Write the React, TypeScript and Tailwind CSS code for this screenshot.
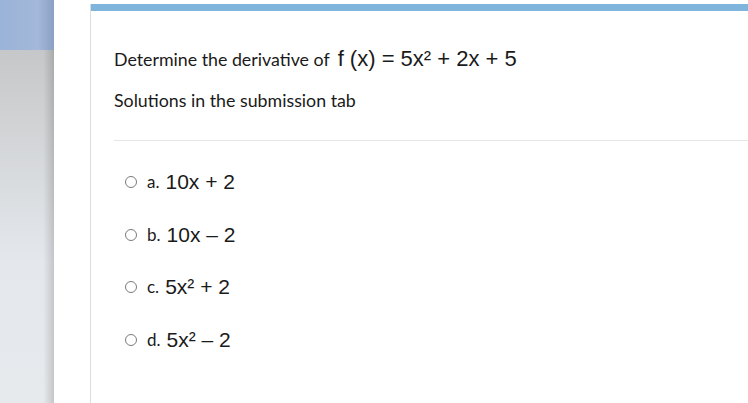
export default function App() {
  const options = [
    { letter: "a.", text: <>10x + 2</> },
    { letter: "b.", text: <>10x – 2</> },
    { letter: "c.", text: <>5x² + 2</> },
    { letter: "d.", text: <>5x² – 2</> },
  ];

  return (
    <div className="flex h-[403px] w-[748px] overflow-hidden bg-white">
      {/* left sidebar strip */}
      <div className="flex w-[54px] shrink-0 flex-col">
        <div className="h-[50px] bg-[linear-gradient(to_right,#9ab3d8,#a3b8da_70%,#8aa0c4)]" />
        <div className="flex-1 bg-[linear-gradient(to_bottom,#c6c7c8,#e4e8ec_60%,#e6eaed)]">
          <div className="h-full w-full bg-[linear-gradient(to_right,transparent_80%,rgba(0,0,0,0.15))]" />
        </div>
      </div>

      <div className="w-[36px] shrink-0" />

      {/* question card */}
      <div className="mt-[4px] flex flex-1 flex-col border-l border-[#dcdcdc]">
        <div className="h-[7px] bg-[#7fb5dc]" />
        <div className="pl-[23px] font-['Lato',sans-serif] text-[#1a1a1a]">
          <p className="mt-[37px] flex items-baseline text-[17.8px] leading-[22px]">
            Determine the derivative of
            <span className="ml-[8px] whitespace-pre font-['Liberation_Sans',Arial,sans-serif] text-[22px] leading-[22px]">
              f (x) = 5x² + 2x + 5
            </span>
          </p>
          <p className="mt-[19px] text-[17.8px] leading-[22px]">Solutions in the submission tab</p>
          <div className="mt-[29px] h-px bg-[#e6e6e6]" />
          <div className="mt-[30px] flex flex-col gap-[30.5px] pl-[11px]">
            {options.map((o) => (
              <div key={o.letter} className="flex h-[22px] items-center">
                <span className="h-[12px] w-[12px] rounded-full border border-[#7a7a7a]" />
                <span className="ml-[10px] text-[17px]">{o.letter}</span>
                <span className="ml-[6px] font-['Liberation_Sans',Arial,sans-serif] text-[21px]">
                  {o.text}
                </span>
              </div>
            ))}
          </div>
        </div>
      </div>
    </div>
  );
}
